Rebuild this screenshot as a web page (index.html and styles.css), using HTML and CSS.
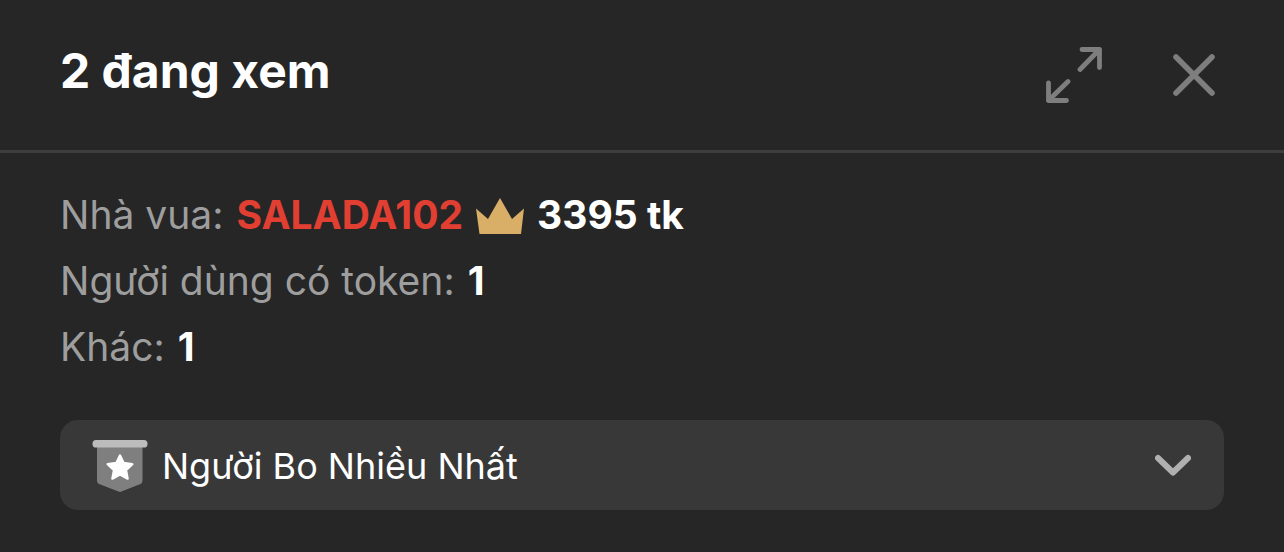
FILE: index.html
```html
<!DOCTYPE html>
<html lang="vi">
<head>
<meta charset="utf-8">
<meta name="viewport" content="width=device-width, initial-scale=1">
<title>2 đang xem</title>
<link rel="stylesheet" href="styles.css">
</head>
<body>
<main class="panel">
  <header class="header">
    <h1 class="title">2 đang xem</h1>
    <div class="actions">
      <button class="icon-button" type="button" aria-label="Mở rộng">
        <svg width="56" height="56" viewBox="0 0 56 56" fill="none" stroke="currentColor" stroke-width="4.8" stroke-linecap="round" stroke-linejoin="round">
          <path d="M36 2.500H53.500V20.500M53.500 2.500L34 22.500"/>
          <path d="M2.500 36V53.500H20.500M2.500 53.500L22 34.500"/>
        </svg>
      </button>
      <button class="icon-button" type="button" aria-label="Đóng">
        <svg width="44" height="44" viewBox="0 0 44 44" fill="none" stroke="currentColor" stroke-width="5.600" stroke-linecap="round">
          <path d="M4 4L40 40M40 4L4 40"/>
        </svg>
      </button>
    </div>
  </header>
  <section class="content">
    <dl class="stats">
      <div class="stat">
        <dt>Nhà vua:</dt>
        <dd class="king">
          <span class="king-name">SALADA102</span>
          <svg class="crown" width="48" height="38" viewBox="0 0 48 38" fill="currentColor" aria-hidden="true">
            <path d="M0 12.500L12 23L24 2L36 23L48 12.500L45 38H3.500Z"/>
          </svg>
          <span>3395 tk</span>
        </dd>
      </div>
      <div class="stat"><dt>Người dùng có token:</dt><dd>1</dd></div>
      <div class="stat"><dt>Khác:</dt><dd>1</dd></div>
    </dl>
    <button class="tippers" type="button" aria-expanded="false">
      <svg width="56" height="54" viewBox="0 0 56 54" aria-hidden="true">
        <path fill="#7f7f7f" d="M5 5H50.500V41.500Q50.500 44 48.500 45L29.500 52.600Q28 53.200 26.500 52.600L7 45Q5 44 5 41.500Z"/>
        <rect x="0.500" y="1" width="55" height="7.500" rx="3.600" fill="#bcbcbc"/>
        <path fill="#fff" stroke="#fff" stroke-width="2.400" stroke-linejoin="round" d="M28 16.500L31.600 24L40.300 25.100L34 31.100L35.600 39.600L28 35.500L20.400 39.600L22 31.100L15.700 25.100L24.400 24Z"/>
      </svg>
      <span class="tippers-label">Người Bo Nhiều Nhất</span>
      <svg width="36" height="24" viewBox="0 0 36 24" fill="none" stroke="#b0b0b0" stroke-width="6" stroke-linecap="round" stroke-linejoin="round" aria-hidden="true">
        <path d="M3 4L18 18.500L33 4"/>
      </svg>
    </button>
  </section>
</main>
</body>
</html>
```

FILE: styles.css
```css
* {
  box-sizing: border-box;
}

body {
  margin: 0;
  background: #262626;
  color: #fff;
  font-family: Inter, "Noto Sans", sans-serif;
}

button {
  margin: 0;
  border: 0;
  font: inherit;
  color: inherit;
  cursor: pointer;
}

svg {
  display: block;
  flex: none;
}

.header {
  display: flex;
  align-items: center;
  justify-content: space-between;
  padding: 39px 60px;
  border-bottom: 3px solid #3d3d3d;
}

.title {
  margin: 0;
  padding-bottom: 8px;
  font-size: 48px;
  line-height: 64px;
  font-weight: 700;
}

.actions {
  display: flex;
  align-items: center;
  gap: 54px;
}

.icon-button {
  padding: 8px;
  background: none;
  color: #7e7e7e;
}

.content {
  padding: 29px 60px 42px;
}

.stats {
  margin: 0 0 40px;
  font-size: 39px;
  line-height: 66px;
}

.stat {
  display: flex;
  gap: 13px;
}

.stat dt {
  color: #9e9e9e;
}

.stat dd {
  margin: 0;
  font-weight: 700;
}

.king {
  display: flex;
  align-items: center;
  gap: 13px;
}

.king-name {
  color: #e23f33;
}

.crown {
  color: #d9ae66;
}

.tippers {
  display: flex;
  align-items: center;
  gap: 14px;
  width: 100%;
  padding: 17px 33px 15px 32px;
  border-radius: 18px;
  background: #383838;
  text-align: left;
}

.tippers-label {
  flex: 1;
  font-size: 36px;
  line-height: 58px;
}
```
